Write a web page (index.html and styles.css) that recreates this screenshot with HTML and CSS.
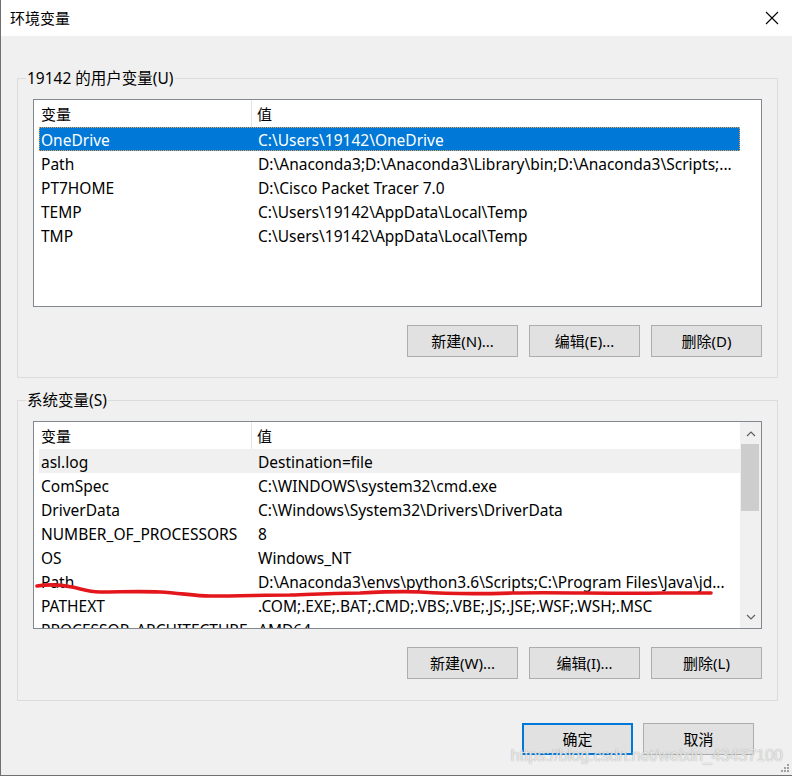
FILE: index.html
```html
<!DOCTYPE html>
<html lang="zh-CN">
<head>
<meta charset="utf-8">
<title>环境变量</title>
<link rel="stylesheet" href="styles.css">
</head>
<body>
<div class="window">
  <div class="titlebar">
    <span class="title">环境变量</span>
    <svg class="close" width="14" height="14" viewBox="0 0 14 14"><path d="M1 1 L13 13 M13 1 L1 13" stroke="#000" stroke-width="1.1" fill="none"/></svg>
  </div>
  <div class="content">
    <section class="group">
      <div class="group-title">19142 的用户变量(U)</div>
      <div class="list">
        <div class="list-main">
          <div class="row head"><span class="c1">变量</span><span class="c2">值</span></div>
          <div class="row selected"><span class="c1">OneDrive</span><span class="c2">C:\Users\19142\OneDrive</span></div>
          <div class="row"><span class="c1">Path</span><span class="c2">D:\Anaconda3;D:\Anaconda3\Library\bin;D:\Anaconda3\Scripts;...</span></div>
          <div class="row"><span class="c1">PT7HOME</span><span class="c2">D:\Cisco Packet Tracer 7.0</span></div>
          <div class="row"><span class="c1">TEMP</span><span class="c2">C:\Users\19142\AppData\Local\Temp</span></div>
          <div class="row"><span class="c1">TMP</span><span class="c2">C:\Users\19142\AppData\Local\Temp</span></div>
        </div>
        <div class="no-scroll"></div>
      </div>
      <div class="buttons">
        <button class="btn">新建(N)...</button>
        <button class="btn">编辑(E)...</button>
        <button class="btn">删除(D)</button>
      </div>
    </section>
    <section class="group group2">
      <div class="group-title">系统变量(S)</div>
      <div class="list">
        <div class="list-main">
          <div class="row head"><span class="c1">变量</span><span class="c2">值</span></div>
          <div class="row hover"><span class="c1">asl.log</span><span class="c2">Destination=file</span></div>
          <div class="row"><span class="c1">ComSpec</span><span class="c2">C:\WINDOWS\system32\cmd.exe</span></div>
          <div class="row"><span class="c1">DriverData</span><span class="c2">C:\Windows\System32\Drivers\DriverData</span></div>
          <div class="row"><span class="c1">NUMBER_OF_PROCESSORS</span><span class="c2">8</span></div>
          <div class="row"><span class="c1">OS</span><span class="c2">Windows_NT</span></div>
          <div class="row"><span class="c1">Path</span><span class="c2">D:\Anaconda3\envs\python3.6\Scripts;C:\Program Files\Java\jd...</span></div>
          <div class="row"><span class="c1">PATHEXT</span><span class="c2">.COM;.EXE;.BAT;.CMD;.VBS;.VBE;.JS;.JSE;.WSF;.WSH;.MSC</span></div>
          <div class="row"><span class="c1">PROCESSOR_ARCHITECTURE</span><span class="c2">AMD64</span></div>
        </div>
        <div class="scrollbar">
          <svg class="arrow" width="20" height="14" viewBox="0 0 20 14"><path d="M6 9 L10 5 L14 9" stroke="#606060" stroke-width="1.2" fill="none"/></svg>
          <div class="track"><div class="thumb"></div></div>
          <svg class="arrow" width="20" height="14" viewBox="0 0 20 14"><path d="M6 5 L10 9 L14 5" stroke="#606060" stroke-width="1.2" fill="none"/></svg>
        </div>
      </div>
      <div class="buttons">
        <button class="btn">新建(W)...</button>
        <button class="btn">编辑(I)...</button>
        <button class="btn">删除(L)</button>
      </div>
    </section>
    <div class="dialog-buttons">
      <button class="btn default">确定</button>
      <button class="btn">取消</button>
    </div>
  </div>
  <svg class="scribble" width="792" height="776" viewBox="0 0 792 776"><path d="M37 586 C50 584 62 585 72 587 C82 589 88 592 100 592 C120 592 140 591 160 592 C180 593 195 596 210 596 C240 596 265 595 290 595 C320 594 340 593 360 593 C380 592 400 591 420 592 C450 594 480 594 513 593 C560 592 610 594 663 593 C685 593 700 593 711 593" stroke="#e3161c" stroke-width="3.6" stroke-linecap="round" fill="none"/></svg>
  <div class="watermark">https://blog.csdn.net/weixin_43437100</div>
  <svg class="grip" width="10" height="10" viewBox="0 0 10 10"><rect x="7" y="1" width="2" height="2" fill="#a0a0a0"/><rect x="4" y="4" width="2" height="2" fill="#a0a0a0"/><rect x="7" y="4" width="2" height="2" fill="#a0a0a0"/><rect x="1" y="7" width="2" height="2" fill="#a0a0a0"/><rect x="4" y="7" width="2" height="2" fill="#a0a0a0"/><rect x="7" y="7" width="2" height="2" fill="#a0a0a0"/></svg>
</div>
</body>
</html>
```

FILE: styles.css
```css
* { box-sizing: border-box; }
html, body { margin: 0; padding: 0; }
body {
  font-family: "Noto Sans", "Noto Sans CJK SC", sans-serif;
  font-size: 15px;
  color: #000;
  background: #f0f0f0;
}
.window {
  position: relative;
  width: 792px;
  height: 776px;
  background: #f0f0f0;
  border-left: 1px solid #707070;
  border-bottom: 1px solid #707070;
  overflow: hidden;
}
.titlebar {
  height: 36px;
  background: #fff;
  display: flex;
  align-items: center;
  justify-content: space-between;
  padding: 0 13px 0 9px;
}
.title {
  font-family: "Noto Sans CJK SC", sans-serif;
  font-size: 15px;
  line-height: 20px;
}
.close { display: block; }
.content {
  padding: 42px 14px 0 16px;
}
.group {
  border: 1px solid #dcdcdc;
  padding: 0 15px 20px 15px;
}
.group2 { margin-top: 22px; padding-bottom: 21px; }
.group-title {
  width: fit-content;
  margin: -11px 0 0 -7px;
  padding: 0 1px;
  line-height: 20px;
  height: 20px;
  background: #f0f0f0;
  white-space: nowrap;
  font-size: 15.5px;
}
.list {
  margin-top: 11px;
  height: 208px;
  border: 1px solid #828790;
  background: #fff;
  display: flex;
  overflow: hidden;
  font-size: 15.5px;
}
.list-main {
  margin-left: 5px;
  width: 701px;
  flex: none;
  overflow: hidden;
}
.no-scroll { flex: 1; }
.row {
  display: grid;
  grid-template-columns: 213px 1fr;
  height: 24px;
  line-height: 26px;
  white-space: nowrap;
}
.row .c1 { padding-left: 2px; overflow: hidden; }
.row .c2 { padding-left: 6px; overflow: hidden; }
.row.head { height: 27px; line-height: 29px; font-size: 15px; }
.row.head .c1 { border-right: 1px solid #e5e5e5; padding-left: 2px; }
.row.head .c2 { padding-left: 5px; }
.row.selected {
  background: #0078d7;
  color: #fff;
  outline: 1px dotted #f0a24a;
  outline-offset: -1px;
}
.row.hover { background: #f0f0f0; }
.scrollbar {
  width: 21px;
  flex: none;
  background: #f0f0f0;
  display: flex;
  flex-direction: column;
  align-items: center;
  padding: 5px 0 4px;
}
.arrow { display: block; flex: none; }
.track { flex: 1; width: 100%; padding: 3px 2px 0 1px; }
.thumb { height: 67px; background: #cdcdcd; }
.buttons {
  display: flex;
  justify-content: flex-end;
  gap: 11px;
  margin-top: 18px;
}
.btn {
  width: 111px;
  height: 32px;
  background: #e1e1e1;
  border: 1px solid #adadad;
  border-radius: 0;
  font-family: "Noto Sans", "Noto Sans CJK SC", sans-serif;
  font-size: 15px;
  color: #000;
  padding: 0;
  margin: 0;
  line-height: 30px;
}
.btn.default { border: 2px solid #0078d7; line-height: 28px; }
.dialog-buttons {
  display: flex;
  justify-content: flex-end;
  gap: 10px;
  margin-top: 22px;
  padding-right: 24px;
}
.scribble {
  position: absolute;
  left: -1px;
  top: 0;
  pointer-events: none;
}
.watermark {
  position: absolute;
  right: 9px;
  top: 747px;
  font-family: "Liberation Sans", sans-serif;
  font-size: 16px;
  color: rgba(255, 255, 255, 0.75);
  text-shadow: 0 0 1px rgba(120, 120, 120, 0.8);
  white-space: nowrap;
  pointer-events: none;
}
.grip {
  position: absolute;
  right: 2px;
  bottom: 2px;
}
```
